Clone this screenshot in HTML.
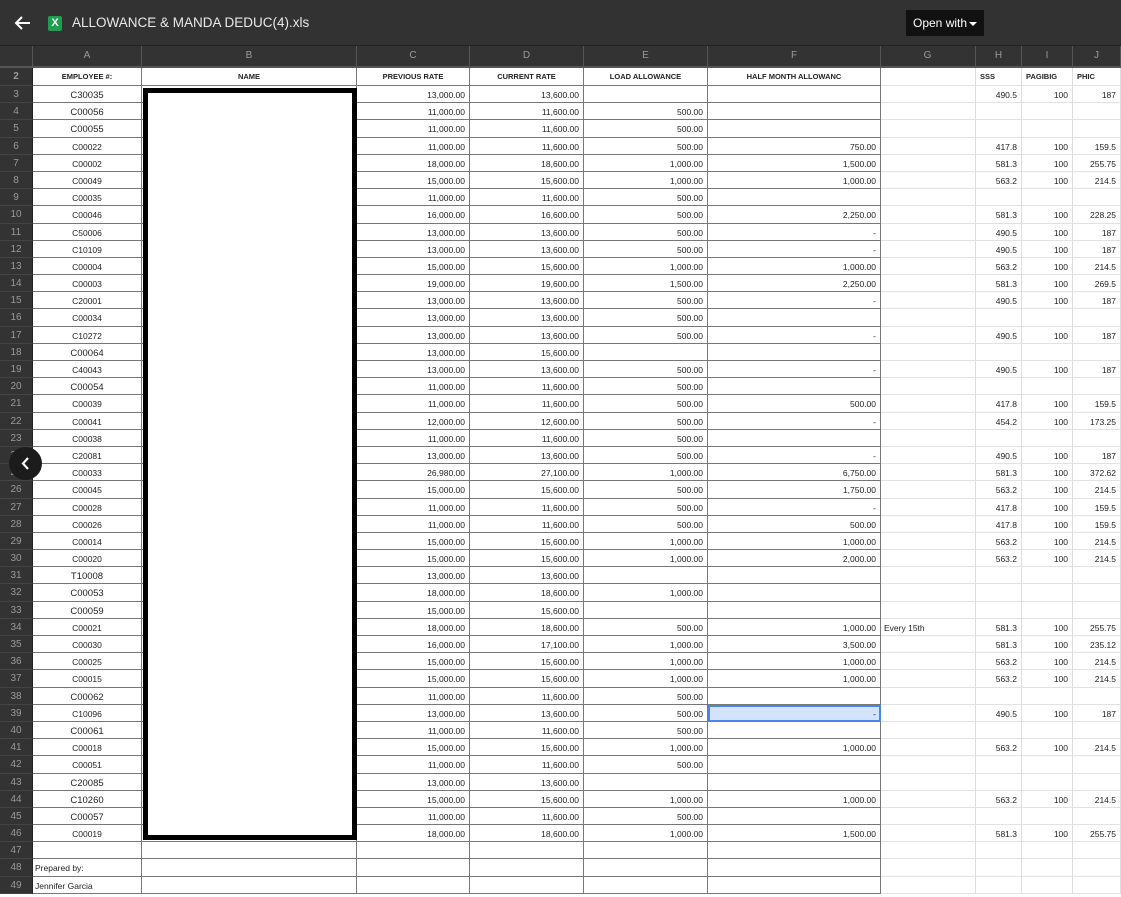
<!DOCTYPE html>
<html><head><meta charset="utf-8"><style>
*{margin:0;padding:0;box-sizing:border-box}
body{width:1121px;height:897px;overflow:hidden;background:#fff;font-family:"Liberation Sans",Arial,sans-serif;position:relative}
.top{position:absolute;left:0;top:0;width:1121px;height:46px;background:#323232;border-bottom:1px solid #222}
.back{position:absolute;left:13px;top:13px}
.xl{position:absolute;left:48px;top:16px;width:14px;height:15px;background:#1e9e4f;border-radius:2px;color:#fff;font-size:11px;font-weight:bold;text-align:center;line-height:15px}
.title{position:absolute;left:72px;top:15px;color:#e8e8e8;font-size:13.5px}
.open{position:absolute;left:906px;top:10px;width:78px;height:26px;background:#111;color:#fff;font-size:12px;line-height:26px;padding-left:7px}
.open:after{content:"";position:absolute;right:7px;top:12px;border-left:4px solid transparent;border-right:4px solid transparent;border-top:4px solid #fff}
.g{display:grid;grid-template-columns:33px 109px 215px 113px 114px 124px 173px 95px 46px 51px 48px;height:17.2px;font-size:8.5px;color:#222}
.g span{background:#fff;border-right:1px solid #777;border-bottom:1px solid #777;white-space:nowrap;overflow:hidden;line-height:19px;padding:0 4px;text-align:right}
.g span:nth-child(1){background:#333;color:#9a9a9a;text-align:center;font-size:10px;line-height:17px;border-right:1px solid #222;border-bottom:1px solid #444}
.g span:nth-child(2){text-align:center}
.g span:nth-child(3){text-align:center}
.g span:nth-child(8){text-align:left;border-right:1px solid #ddd;border-bottom:1px solid #e2e2e2;padding-left:3px}
.g span:nth-child(9),.g span:nth-child(10),.g span:nth-child(11){border-right:1px solid #ddd;border-bottom:1px solid #e2e2e2}
.h{height:21.5px}
.h span{background:#333 !important;color:#9a9a9a !important;text-align:center !important;font-size:10px;line-height:20px !important;border-right:1px solid #555 !important;border-bottom:2px solid #555 !important}
.hd{height:18.5px}
.hd span{font-weight:bold;font-size:7.5px;line-height:18px}
.hd span:nth-child(9),.hd span:nth-child(10),.hd span:nth-child(11){text-align:left}
.big span:nth-child(2){font-size:9.5px}
.box{position:absolute;left:143px;top:88px;width:214px;height:752px;border:5px solid #000;background:#fff}
.nav{position:absolute;left:9px;top:447px;width:33px;height:33px;border-radius:50%;background:#1c1c1c}
.sel{background:#d3e3fb !important;outline:2px solid #4a86e8;outline-offset:-2px}
</style></head><body>
<div class="top">
<svg class="back" width="20" height="20" viewBox="0 0 20 20"><path d="M17 10H4M9 4L3 10l6 6" stroke="#fff" stroke-width="2" fill="none"/></svg>
<div class="xl">X</div>
<div class="title">ALLOWANCE &amp; MANDA DEDUC(4).xls</div>
<div class="open">Open with</div>
</div>
<div style="position:absolute;left:0;top:46px">
<div class="g h"><span></span><span>A</span><span>B</span><span>C</span><span>D</span><span>E</span><span>F</span><span>G</span><span>H</span><span>I</span><span>J</span></div>
<div class="g hd"><span>2</span><span>EMPLOYEE #:</span><span>NAME</span><span style="text-align:center">PREVIOUS RATE</span><span style="text-align:center">CURRENT RATE</span><span style="text-align:center">LOAD ALLOWANCE</span><span style="text-align:center">HALF MONTH ALLOWANC</span><span></span><span>SSS</span><span>PAGIBIG</span><span>PHIC</span></div>
<div class="g big"><span>3</span><span>C30035</span><span></span><span>13,000.00</span><span>13,600.00</span><span></span><span></span><span></span><span>490.5</span><span>100</span><span>187</span></div>
<div class="g big"><span>4</span><span>C00056</span><span></span><span>11,000.00</span><span>11,600.00</span><span>500.00</span><span></span><span></span><span></span><span></span><span></span></div>
<div class="g big"><span>5</span><span>C00055</span><span></span><span>11,000.00</span><span>11,600.00</span><span>500.00</span><span></span><span></span><span></span><span></span><span></span></div>
<div class="g"><span>6</span><span>C00022</span><span></span><span>11,000.00</span><span>11,600.00</span><span>500.00</span><span>750.00</span><span></span><span>417.8</span><span>100</span><span>159.5</span></div>
<div class="g"><span>7</span><span>C00002</span><span></span><span>18,000.00</span><span>18,600.00</span><span>1,000.00</span><span>1,500.00</span><span></span><span>581.3</span><span>100</span><span>255.75</span></div>
<div class="g"><span>8</span><span>C00049</span><span></span><span>15,000.00</span><span>15,600.00</span><span>1,000.00</span><span>1,000.00</span><span></span><span>563.2</span><span>100</span><span>214.5</span></div>
<div class="g"><span>9</span><span>C00035</span><span></span><span>11,000.00</span><span>11,600.00</span><span>500.00</span><span></span><span></span><span></span><span></span><span></span></div>
<div class="g"><span>10</span><span>C00046</span><span></span><span>16,000.00</span><span>16,600.00</span><span>500.00</span><span>2,250.00</span><span></span><span>581.3</span><span>100</span><span>228.25</span></div>
<div class="g"><span>11</span><span>C50006</span><span></span><span>13,000.00</span><span>13,600.00</span><span>500.00</span><span>-</span><span></span><span>490.5</span><span>100</span><span>187</span></div>
<div class="g"><span>12</span><span>C10109</span><span></span><span>13,000.00</span><span>13,600.00</span><span>500.00</span><span>-</span><span></span><span>490.5</span><span>100</span><span>187</span></div>
<div class="g"><span>13</span><span>C00004</span><span></span><span>15,000.00</span><span>15,600.00</span><span>1,000.00</span><span>1,000.00</span><span></span><span>563.2</span><span>100</span><span>214.5</span></div>
<div class="g"><span>14</span><span>C00003</span><span></span><span>19,000.00</span><span>19,600.00</span><span>1,500.00</span><span>2,250.00</span><span></span><span>581.3</span><span>100</span><span>269.5</span></div>
<div class="g"><span>15</span><span>C20001</span><span></span><span>13,000.00</span><span>13,600.00</span><span>500.00</span><span>-</span><span></span><span>490.5</span><span>100</span><span>187</span></div>
<div class="g"><span>16</span><span>C00034</span><span></span><span>13,000.00</span><span>13,600.00</span><span>500.00</span><span></span><span></span><span></span><span></span><span></span></div>
<div class="g"><span>17</span><span>C10272</span><span></span><span>13,000.00</span><span>13,600.00</span><span>500.00</span><span>-</span><span></span><span>490.5</span><span>100</span><span>187</span></div>
<div class="g big"><span>18</span><span>C00064</span><span></span><span>13,000.00</span><span>15,600.00</span><span></span><span></span><span></span><span></span><span></span><span></span></div>
<div class="g"><span>19</span><span>C40043</span><span></span><span>13,000.00</span><span>13,600.00</span><span>500.00</span><span>-</span><span></span><span>490.5</span><span>100</span><span>187</span></div>
<div class="g big"><span>20</span><span>C00054</span><span></span><span>11,000.00</span><span>11,600.00</span><span>500.00</span><span></span><span></span><span></span><span></span><span></span></div>
<div class="g"><span>21</span><span>C00039</span><span></span><span>11,000.00</span><span>11,600.00</span><span>500.00</span><span>500.00</span><span></span><span>417.8</span><span>100</span><span>159.5</span></div>
<div class="g"><span>22</span><span>C00041</span><span></span><span>12,000.00</span><span>12,600.00</span><span>500.00</span><span>-</span><span></span><span>454.2</span><span>100</span><span>173.25</span></div>
<div class="g"><span>23</span><span>C00038</span><span></span><span>11,000.00</span><span>11,600.00</span><span>500.00</span><span></span><span></span><span></span><span></span><span></span></div>
<div class="g"><span>24</span><span>C20081</span><span></span><span>13,000.00</span><span>13,600.00</span><span>500.00</span><span>-</span><span></span><span>490.5</span><span>100</span><span>187</span></div>
<div class="g"><span>25</span><span>C00033</span><span></span><span>26,980.00</span><span>27,100.00</span><span>1,000.00</span><span>6,750.00</span><span></span><span>581.3</span><span>100</span><span>372.62</span></div>
<div class="g"><span>26</span><span>C00045</span><span></span><span>15,000.00</span><span>15,600.00</span><span>500.00</span><span>1,750.00</span><span></span><span>563.2</span><span>100</span><span>214.5</span></div>
<div class="g"><span>27</span><span>C00028</span><span></span><span>11,000.00</span><span>11,600.00</span><span>500.00</span><span>-</span><span></span><span>417.8</span><span>100</span><span>159.5</span></div>
<div class="g"><span>28</span><span>C00026</span><span></span><span>11,000.00</span><span>11,600.00</span><span>500.00</span><span>500.00</span><span></span><span>417.8</span><span>100</span><span>159.5</span></div>
<div class="g"><span>29</span><span>C00014</span><span></span><span>15,000.00</span><span>15,600.00</span><span>1,000.00</span><span>1,000.00</span><span></span><span>563.2</span><span>100</span><span>214.5</span></div>
<div class="g"><span>30</span><span>C00020</span><span></span><span>15,000.00</span><span>15,600.00</span><span>1,000.00</span><span>2,000.00</span><span></span><span>563.2</span><span>100</span><span>214.5</span></div>
<div class="g big"><span>31</span><span>T10008</span><span></span><span>13,000.00</span><span>13,600.00</span><span></span><span></span><span></span><span></span><span></span><span></span></div>
<div class="g big"><span>32</span><span>C00053</span><span></span><span>18,000.00</span><span>18,600.00</span><span>1,000.00</span><span></span><span></span><span></span><span></span><span></span></div>
<div class="g big"><span>33</span><span>C00059</span><span></span><span>15,000.00</span><span>15,600.00</span><span></span><span></span><span></span><span></span><span></span><span></span></div>
<div class="g"><span>34</span><span>C00021</span><span></span><span>18,000.00</span><span>18,600.00</span><span>500.00</span><span>1,000.00</span><span>Every 15th</span><span>581.3</span><span>100</span><span>255.75</span></div>
<div class="g"><span>35</span><span>C00030</span><span></span><span>16,000.00</span><span>17,100.00</span><span>1,000.00</span><span>3,500.00</span><span></span><span>581.3</span><span>100</span><span>235.12</span></div>
<div class="g"><span>36</span><span>C00025</span><span></span><span>15,000.00</span><span>15,600.00</span><span>1,000.00</span><span>1,000.00</span><span></span><span>563.2</span><span>100</span><span>214.5</span></div>
<div class="g"><span>37</span><span>C00015</span><span></span><span>15,000.00</span><span>15,600.00</span><span>1,000.00</span><span>1,000.00</span><span></span><span>563.2</span><span>100</span><span>214.5</span></div>
<div class="g big"><span>38</span><span>C00062</span><span></span><span>11,000.00</span><span>11,600.00</span><span>500.00</span><span></span><span></span><span></span><span></span><span></span></div>
<div class="g"><span>39</span><span>C10096</span><span></span><span>13,000.00</span><span>13,600.00</span><span>500.00</span><span class="sel">-</span><span></span><span>490.5</span><span>100</span><span>187</span></div>
<div class="g big"><span>40</span><span>C00061</span><span></span><span>11,000.00</span><span>11,600.00</span><span>500.00</span><span></span><span></span><span></span><span></span><span></span></div>
<div class="g"><span>41</span><span>C00018</span><span></span><span>15,000.00</span><span>15,600.00</span><span>1,000.00</span><span>1,000.00</span><span></span><span>563.2</span><span>100</span><span>214.5</span></div>
<div class="g"><span>42</span><span>C00051</span><span></span><span>11,000.00</span><span>11,600.00</span><span>500.00</span><span></span><span></span><span></span><span></span><span></span></div>
<div class="g big"><span>43</span><span>C20085</span><span></span><span>13,000.00</span><span>13,600.00</span><span></span><span></span><span></span><span></span><span></span><span></span></div>
<div class="g big"><span>44</span><span>C10260</span><span></span><span>15,000.00</span><span>15,600.00</span><span>1,000.00</span><span>1,000.00</span><span></span><span>563.2</span><span>100</span><span>214.5</span></div>
<div class="g big"><span>45</span><span>C00057</span><span></span><span>11,000.00</span><span>11,600.00</span><span>500.00</span><span></span><span></span><span></span><span></span><span></span></div>
<div class="g"><span>46</span><span>C00019</span><span></span><span>18,000.00</span><span>18,600.00</span><span>1,000.00</span><span>1,500.00</span><span></span><span>581.3</span><span>100</span><span>255.75</span></div>
<div class="g"><span>47</span><span></span><span></span><span></span><span></span><span></span><span></span><span></span><span></span><span></span><span></span></div>
<div class="g"><span>48</span><span style="text-align:left;padding-left:2px">Prepared by:</span><span></span><span></span><span></span><span></span><span></span><span></span><span></span><span></span><span></span></div>
<div class="g"><span>49</span><span style="text-align:left;padding-left:2px">Jennifer Garcia</span><span></span><span></span><span></span><span></span><span></span><span></span><span></span><span></span><span></span></div>
</div>
<div class="box"></div>
<div class="nav"><svg width="33" height="33" viewBox="0 0 33 33"><path d="M19 11l-5 5.5 5 5.5" stroke="#fff" stroke-width="2.2" fill="none"/></svg></div>
</body></html>
